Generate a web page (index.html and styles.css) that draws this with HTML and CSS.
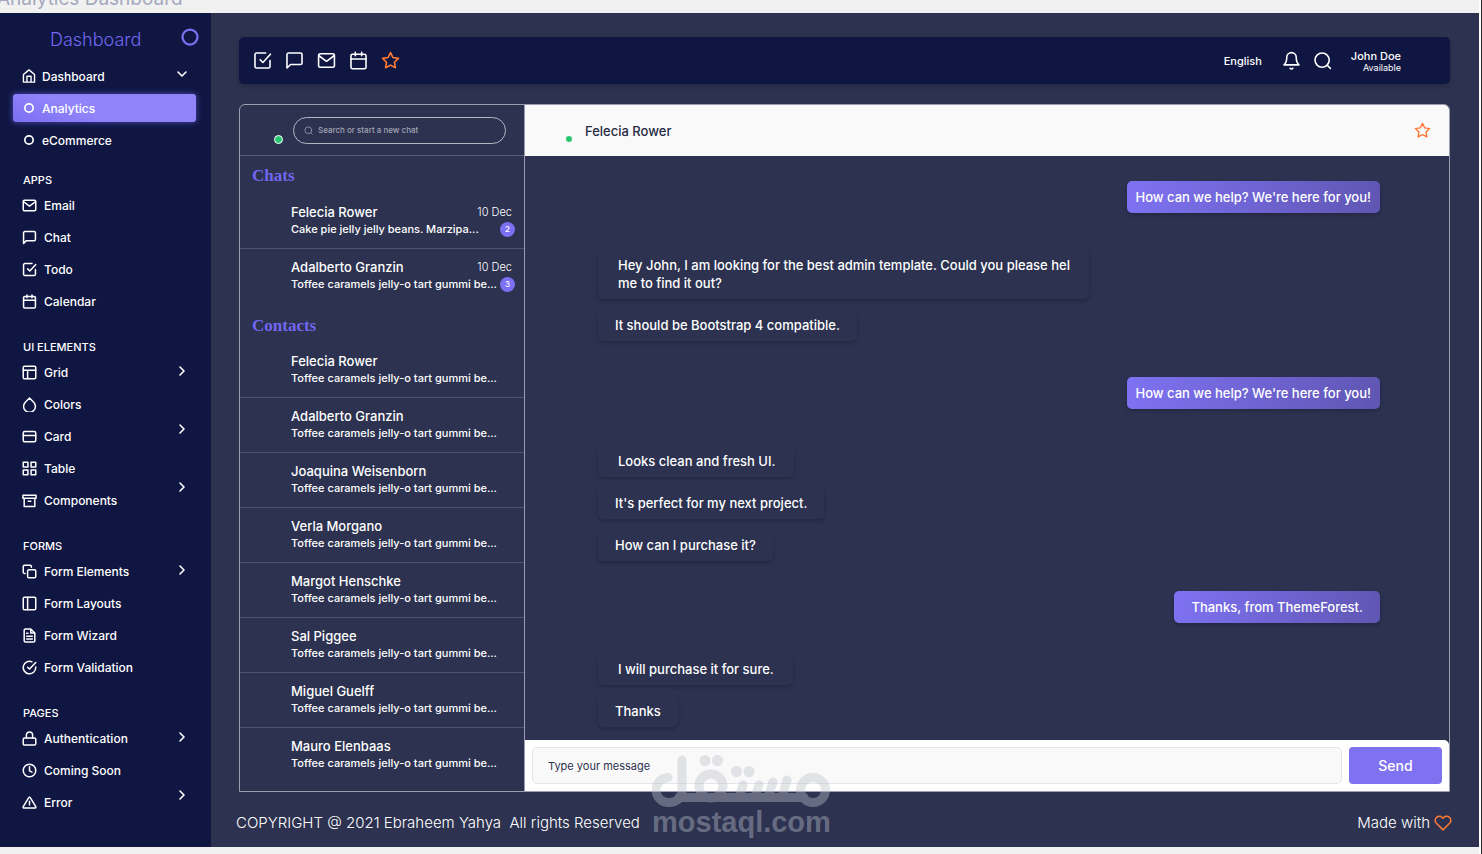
FILE: index.html
```html
<!DOCTYPE html>
<html lang="en">
<head>
<meta charset="utf-8">
<title>Analytics Dashboard</title>
<link rel="stylesheet" href="styles.css">
</head>
<body>
<svg class="sprite" aria-hidden="true">
  <symbol id="home" viewBox="0 0 24 24"><path d="M2.500 9.500 12 1.500l9.500 8V22.500h-19z"/><path d="M8.500 22V12.500h7V22"/></symbol>
  <symbol id="mail" viewBox="0 0 24 24"><rect x="2" y="3.500" width="20" height="17" rx="2"/><path d="m2.500 6 9.500 7 9.500-7"/></symbol>
  <symbol id="chat" viewBox="0 0 24 24"><path d="M21.500 15a2 2 0 0 1-2 2H7l-4.500 4.500V4.500a2 2 0 0 1 2-2h15a2 2 0 0 1 2 2z"/></symbol>
  <symbol id="todo" viewBox="0 0 24 24"><path d="m9 11 3.500 3.500L22 4"/><path d="M21.500 12v7.500a2 2 0 0 1-2 2h-15a2 2 0 0 1-2-2v-15a2 2 0 0 1 2-2H16"/></symbol>
  <symbol id="calendar" viewBox="0 0 24 24"><rect x="2.500" y="4" width="19" height="18.500" rx="2"/><path d="M16 1.500V6M8 1.500V6M2.500 10h19"/></symbol>
  <symbol id="star" viewBox="0 0 24 24"><path d="m12 2 3.100 6.300 6.900 1-5 4.900 1.200 6.900-6.200-3.300-6.200 3.300L7 14.200 2 9.300l6.900-1z"/></symbol>
  <symbol id="grid" viewBox="0 0 24 24"><rect x="2" y="2" width="20" height="20" rx="2"/><path d="M2 8.500h20M9 22V8.500"/></symbol>
  <symbol id="drop" viewBox="0 0 24 24"><path d="m12 1.500 6.700 6.800a9.500 9.500 0 1 1-13.400 0z"/></symbol>
  <symbol id="card" viewBox="0 0 24 24"><rect x="2" y="4" width="20" height="16.500" rx="2.500"/><path d="M2 10.500h20"/></symbol>
  <symbol id="table" viewBox="0 0 24 24"><path d="M2 2h7.500v7.500H2zM14.500 2H22v7.500h-7.500zM14.500 14.500H22V22h-7.500zM2 14.500h7.500V22H2z"/></symbol>
  <symbol id="box" viewBox="0 0 24 24"><path d="M3.500 8.500v13h17v-13M1.500 3.500h21v5h-21zM10 13h4"/></symbol>
  <symbol id="copy" viewBox="0 0 24 24"><rect x="9" y="9" width="13" height="13" rx="2"/><path d="M5 15H4a2 2 0 0 1-2-2V4a2 2 0 0 1 2-2h9a2 2 0 0 1 2 2v1"/></symbol>
  <symbol id="layout" viewBox="0 0 24 24"><rect x="2" y="2" width="20" height="20" rx="2"/><path d="M9 2v20"/></symbol>
  <symbol id="file" viewBox="0 0 24 24"><path d="M14 1.500H5.500a2 2 0 0 0-2 2v17a2 2 0 0 0 2 2h13a2 2 0 0 0 2-2V8zM14 1.500V8h6.500M16.500 13h-9M16.500 17.500h-9M9.500 8.500h-2"/></symbol>
  <symbol id="check" viewBox="0 0 24 24"><path d="M22 11v1a10 10 0 1 1-6-9.100"/><path d="M22 4 12 14.500l-3-3"/></symbol>
  <symbol id="lock" viewBox="0 0 24 24"><rect x="2" y="11" width="20" height="11.500" rx="2"/><path d="M7 11V6.500a5 5 0 0 1 10 0V11"/></symbol>
  <symbol id="clock" viewBox="0 0 24 24"><circle cx="12" cy="12" r="10"/><path d="M12 6v6.500l4 2"/></symbol>
  <symbol id="alert" viewBox="0 0 24 24"><path d="M10.500 4.500 2 18.500a1.500 1.500 0 0 0 1.300 2.300h17.400a1.500 1.500 0 0 0 1.300-2.300l-8.500-14a1.700 1.700 0 0 0-3 0zM12 10v6"/></symbol>
  <symbol id="ring" viewBox="0 0 24 24"><circle cx="12" cy="12" r="10"/></symbol>
  <symbol id="bell" viewBox="0 0 24 24"><path d="M18 8a6 6 0 0 0-12 0c0 7-3.500 9.500-3.500 9.500h19S18 15 18 8M10.300 21.800a2 2 0 0 0 3.400 0"/></symbol>
  <symbol id="search" viewBox="0 0 24 24"><circle cx="11.500" cy="11.500" r="9"/><path d="m18 18 4 4"/></symbol>
  <symbol id="right" viewBox="0 0 12 12"><path d="m4 2 4 4-4 4"/></symbol>
  <symbol id="down" viewBox="0 0 12 12"><path d="m2 4 4 4 4-4"/></symbol>
  <symbol id="heart" viewBox="0 0 24 24"><path d="M20.800 4.600a5.500 5.500 0 0 0-7.800 0l-1 1.100-1-1.100a5.500 5.500 0 0 0-7.800 7.800L12 21.200l8.800-8.800a5.500 5.500 0 0 0 0-7.800z"/></symbol>
</svg>

<div class="strip"><span class="strip-title">Analytics Dashboard</span></div>

<div class="app">
  <aside class="sidebar">
    <div class="brand">
      <h1>Dashboard</h1>
      <svg class="brand-ring"><use href="#ring"/></svg>
    </div>
    <nav>
      <ul class="menu top-menu">
        <li><a class="item parent" href="#"><svg class="icon"><use href="#home"/></svg>Dashboard<svg class="chev"><use href="#down"/></svg></a></li>
        <li><a class="item active" href="#"><svg class="dot-icon"><use href="#ring"/></svg>Analytics</a></li>
        <li><a class="item child" href="#"><svg class="dot-icon"><use href="#ring"/></svg>eCommerce</a></li>
      </ul>

      <section class="group">
        <h2>APPS</h2>
        <ul class="menu">
          <li><a class="item" href="#"><svg class="icon"><use href="#mail"/></svg>Email</a></li>
          <li><a class="item" href="#"><svg class="icon"><use href="#chat"/></svg>Chat</a></li>
          <li><a class="item" href="#"><svg class="icon"><use href="#todo"/></svg>Todo</a></li>
          <li><a class="item" href="#"><svg class="icon"><use href="#calendar"/></svg>Calendar</a></li>
        </ul>
      </section>

      <section class="group">
        <h2>UI ELEMENTS</h2>
        <div class="split">
          <ul class="menu">
            <li><a class="item" href="#"><svg class="icon"><use href="#grid"/></svg>Grid</a></li>
            <li><a class="item" href="#"><svg class="icon"><use href="#drop"/></svg>Colors</a></li>
            <li><a class="item" href="#"><svg class="icon"><use href="#card"/></svg>Card</a></li>
            <li><a class="item" href="#"><svg class="icon"><use href="#table"/></svg>Table</a></li>
            <li><a class="item" href="#"><svg class="icon"><use href="#box"/></svg>Components</a></li>
          </ul>
          <div class="chevs"><svg class="chev"><use href="#right"/></svg><svg class="chev"><use href="#right"/></svg><svg class="chev"><use href="#right"/></svg></div>
        </div>
      </section>

      <section class="group">
        <h2>FORMS</h2>
        <div class="split">
          <ul class="menu">
            <li><a class="item" href="#"><svg class="icon"><use href="#copy"/></svg>Form Elements</a></li>
            <li><a class="item" href="#"><svg class="icon"><use href="#layout"/></svg>Form Layouts</a></li>
            <li><a class="item" href="#"><svg class="icon"><use href="#file"/></svg>Form Wizard</a></li>
            <li><a class="item" href="#"><svg class="icon"><use href="#check"/></svg>Form Validation</a></li>
          </ul>
          <div class="chevs"><svg class="chev"><use href="#right"/></svg></div>
        </div>
      </section>

      <section class="group">
        <h2>PAGES</h2>
        <div class="split">
          <ul class="menu">
            <li><a class="item" href="#"><svg class="icon"><use href="#lock"/></svg>Authentication</a></li>
            <li><a class="item" href="#"><svg class="icon"><use href="#clock"/></svg>Coming Soon</a></li>
            <li><a class="item" href="#"><svg class="icon"><use href="#alert"/></svg>Error</a></li>
          </ul>
          <div class="chevs"><svg class="chev"><use href="#right"/></svg><svg class="chev"><use href="#right"/></svg></div>
        </div>
      </section>
    </nav>
  </aside>

  <main class="main">
    <header class="topbar">
      <div class="shortcuts">
        <button aria-label="Todo"><svg><use href="#todo"/></svg></button>
        <button aria-label="Chat"><svg><use href="#chat"/></svg></button>
        <button aria-label="Email"><svg><use href="#mail"/></svg></button>
        <button aria-label="Calendar"><svg><use href="#calendar"/></svg></button>
        <button class="orange" aria-label="Favourites"><svg><use href="#star"/></svg></button>
      </div>
      <div class="tools">
        <button class="language">English</button>
        <button aria-label="Notifications"><svg><use href="#bell"/></svg></button>
        <button aria-label="Search"><svg><use href="#search"/></svg></button>
        <div class="user"><strong>John Doe</strong><small>Available</small></div>
      </div>
    </header>

    <div class="panel">
      <section class="people">
        <div class="people-head">
          <span class="me"><span class="status"></span></span>
          <label class="search">
            <svg><use href="#search"/></svg>
            <input type="search" placeholder="Search or start a new chat" aria-label="Search or start a new chat">
          </label>
        </div>
        <h3>Chats</h3>
        <ul class="threads">
          <li><div class="line"><b>Felecia Rower</b><time>10 Dec</time></div><div class="line"><p>Cake pie jelly jelly beans. Marzipa...</p><span class="count">2</span></div></li>
          <li><div class="line"><b>Adalberto Granzin</b><time>10 Dec</time></div><div class="line"><p>Toffee caramels jelly-o tart gummi be...</p><span class="count">3</span></div></li>
        </ul>
        <h3>Contacts</h3>
        <ul class="threads">
          <li><b>Felecia Rower</b><p>Toffee caramels jelly-o tart gummi be...</p></li>
          <li><b>Adalberto Granzin</b><p>Toffee caramels jelly-o tart gummi be...</p></li>
          <li><b>Joaquina Weisenborn</b><p>Toffee caramels jelly-o tart gummi be...</p></li>
          <li><b>Verla Morgano</b><p>Toffee caramels jelly-o tart gummi be...</p></li>
          <li><b>Margot Henschke</b><p>Toffee caramels jelly-o tart gummi be...</p></li>
          <li><b>Sal Piggee</b><p>Toffee caramels jelly-o tart gummi be...</p></li>
          <li><b>Miguel Guelff</b><p>Toffee caramels jelly-o tart gummi be...</p></li>
          <li><b>Mauro Elenbaas</b><p>Toffee caramels jelly-o tart gummi be...</p></li>
        </ul>
      </section>

      <section class="talk">
        <header class="talk-head">
          <span class="peer"><span class="status small"></span></span>
          <h2>Felecia Rower</h2>
          <button class="orange" aria-label="Favourite"><svg><use href="#star"/></svg></button>
        </header>
        <div class="messages">
          <div class="turn out"><p>How can we help? We're here for you!</p></div>
          <div class="turn in"><p class="wide">Hey John, I am looking for the best admin template. Could you please hel<br>me to find it out?</p><p>It should be Bootstrap 4 compatible.</p></div>
          <div class="turn out"><p>How can we help? We're here for you!</p></div>
          <div class="turn in"><p class="wide">Looks clean and fresh UI.</p><p>It's perfect for my next project.</p><p>How can I purchase it?</p></div>
          <div class="turn out late"><p class="wide">Thanks, from ThemeForest.</p></div>
          <div class="turn in late"><p class="wide">I will purchase it for sure.</p><p>Thanks</p></div>
        </div>
        <form class="composer">
          <input type="text" placeholder="Type your message" aria-label="Type your message">
          <button type="button">Send</button>
        </form>
      </section>
    </div>

    <footer class="footer">
      <span>COPYRIGHT @ 2021 Ebraheem Yahya&nbsp; All rights Reserved</span>
      <span class="made">Made with <svg><use href="#heart"/></svg></span>
    </footer>
  </main>
</div>

<div class="watermark">
  <svg viewBox="0 0 180 53" aria-hidden="true">
    <path d="M16 22.500a12.500 12.500 0 1 0 1 25c8 0 13-5 13-13V5"/>
    <path d="M27 42.500h125"/>
    <circle cx="59" cy="31" r="12"/>
    <path d="m91 30-4 12M107 30l-4 12M121 27l-5 15M135 25l-5 17"/>
    <circle cx="161" cy="35" r="12.500"/>
    <g class="fill"><circle cx="53" cy="5.500" r="5.500"/><circle cx="65.500" cy="5.500" r="5.500"/><circle cx="84.500" cy="16.500" r="5.500"/><circle cx="97" cy="16.500" r="5.500"/></g>
  </svg>
  <span>mostaql.com</span>
</div>
</body>
</html>
```

FILE: styles.css
```css
* { box-sizing: border-box; }

body {
  margin: 0;
  min-height: 100vh;
  display: flex;
  flex-direction: column;
  padding-bottom: 7px;
  background: #f1f1f1;
  border-right: 1px solid #2b2b2b;
  box-shadow: inset -2px 0 #fff;
  color: #fff;
  font-family: Inter, "Open Sans", sans-serif;
  font-size: 12px;
  font-weight: 500;
}

h1, h2, h3, p, ul { margin: 0; padding: 0; }
ul { list-style: none; }
a { color: inherit; text-decoration: none; }
svg { fill: none; stroke: currentColor; stroke-width: 2; stroke-linejoin: round; stroke-linecap: round; flex: none; }
button { border: 0; padding: 0; background: none; color: inherit; font: inherit; display: flex; }
input { font: inherit; }

.sprite { display: none; }

.strip { height: 13px; overflow: hidden; display: flex; align-items: flex-end; }
.strip-title {
  margin: 0 0 5px -3px;
  color: #a5a8bd;
  font-size: 19px;
  line-height: 18px;
  font-weight: 400;
}

.app { flex: 1; display: flex; margin-right: 2px; background: #2c3250; }

/* Sidebar */
.sidebar { width: 211px; flex: none; background: #0f1642; }
.brand { display: flex; align-items: center; justify-content: space-between; height: 47px; padding: 5px 12px 0 50px; }
.brand h1 { font-size: 18px; font-weight: 300; color: #7367f0; }
.brand-ring { width: 18px; height: 18px; color: #7b6ff2; stroke-width: 3; margin-bottom: 4px; }

.item { display: flex; align-items: center; height: 32px; padding-left: 22px; gap: 7px; font-size: 12px; }
.icon { width: 15px; height: 15px; stroke-width: 2.4; }
.top-menu .item { gap: 6px; }
.top-menu .icon { width: 14px; height: 14px; }
.dot-icon { width: 10px; height: 10px; stroke-width: 4; }
.chev { width: 12px; height: 12px; stroke-width: 1.6; }
.parent .chev { margin: 0 23px 4px auto; }
.top-menu .active, .top-menu .child { gap: 8px; }
.item.active {
  height: 28px;
  margin: 2px 15px 2px 13px;
  padding-left: 11px;
  border-radius: 3px;
  background: linear-gradient(200deg, #9184fb 60%, #7b6ff2);
  box-shadow: 0 0 6px #7367f0aa;
}
.item.child { padding-left: 24px; }

.group { margin-top: 22px; }
.top-menu + .group { margin-top: 16px; }
.group h2 { padding-left: 23px; font-size: 11px; line-height: 17px; font-weight: 500; }
.split { display: flex; }
.split .menu { flex: 1; }
.chevs { display: flex; flex-direction: column; gap: 46px; padding: 9px 23px 0 0; }

/* Main column */
.main { flex: 1; min-width: 0; display: flex; flex-direction: column; padding: 24px 29px 0 28px; }

.topbar {
  display: flex;
  align-items: center;
  justify-content: space-between;
  height: 47px;
  padding: 0 49px 0 14px;
  border-radius: 5px;
  background: #0f1642;
  box-shadow: 0 2px 5px #0003;
}
.topbar svg { width: 19px; height: 19px; }
.shortcuts { display: flex; gap: 13px; }
.tools { display: flex; align-items: center; gap: 12px; }
.language { margin-right: 8px; font-size: 11px; }
.orange { color: #ff7a36; }
.user { display: flex; flex-direction: column; align-items: flex-end; margin-left: 7px; }
.user strong { font-size: 11px; line-height: 14px; font-weight: 500; }
.user small { font-size: 9px; line-height: 10px; font-weight: 400; }

.panel {
  flex: 1;
  display: flex;
  margin-top: 20px;
  border: 1px solid #9b9eb0;
  border-radius: 6px 6px 0 0;
  overflow: hidden;
}

/* People column */
.people { width: 285px; flex: none; border-right: 1px solid #9b9eb0; }
.people-head { display: flex; align-items: center; height: 51px; padding: 0 18px 0 12px; gap: 9px; border-bottom: 1px solid #595e78; }
.me, .peer { position: relative; width: 32px; height: 28px; }
.status {
  position: absolute;
  right: 1px;
  bottom: 0;
  width: 9px;
  height: 9px;
  border: 1px solid #fff;
  border-radius: 50%;
  background: #28c76f;
}
.status.small { width: 6px; height: 6px; border: 0; right: 0; bottom: 3px; }
.search { flex: 1; display: flex; align-items: center; gap: 5px; height: 27px; padding: 0 10px; border: 1px solid #b5b7c5; border-radius: 14px; color: #a3a6b6; }
.search svg { width: 9px; height: 9px; }
.search input { flex: 1; min-width: 0; padding: 0; border: 0; outline: 0; background: none; color: inherit; font-size: 8px; }
.search input::placeholder { color: #a3a6b6; opacity: 1; }

.people h3 {
  padding: 9px 12px 0;
  height: 38px;
  color: #7367f0;
  font: bold 17px/22px "Liberation Serif", serif;
}
.people .threads + h3 { height: 39px; padding-top: 11px; }
.threads li { height: 55px; padding: 10px 6px 0 51px; border-bottom: 1px solid #4f546f; }
.threads li:last-child { border-bottom: 0; }
.threads b { display: block; font-size: 13px; line-height: 16px; font-weight: 500; }
.threads p { font-size: 11px; line-height: 18px; white-space: nowrap; }
.line { display: flex; justify-content: space-between; }
.line time { padding-right: 6px; font-size: 11px; line-height: 16px; font-weight: 300; }
.count { width: 15px; height: 15px; margin: 2px 3px 0 0; border-radius: 50%; background: #7b6ff2; font-size: 8px; line-height: 15px; text-align: center; }

/* Conversation */
.talk { flex: 1; min-width: 0; display: flex; flex-direction: column; }
.talk-head { display: flex; align-items: center; height: 51px; padding: 0 18px 0 15px; gap: 13px; background: #f9f9f9; color: #272b45; }
.talk-head h2 { flex: 1; font-size: 13px; font-weight: 500; }
.talk-head svg { width: 17px; height: 17px; }

.messages { flex: 1; padding: 25px 69px 0 73px; }
.turn { display: flex; flex-direction: column; align-items: flex-start; gap: 10px; margin-bottom: 36px; }
.turn.out { align-items: flex-end; }
.turn:has(+ .late) { margin-bottom: 30px; }
.turn:last-child { margin-bottom: 0; }
.turn p { padding: 7px 17px; border-radius: 5px; font-size: 13px; line-height: 18px; box-shadow: 0 2px 4px #0003; }
.turn p.wide { padding: 7px 19px 7px 20px; }
.turn.out p { padding: 7px 9px; background: linear-gradient(100deg, #7f72f3, #5f56b2); }
.turn.out p.wide { padding: 7px 17px; }

.composer { display: flex; gap: 7px; height: 51px; padding: 7px; background: #fff; border-radius: 0 5px 0 0; }
.composer input { flex: 1; min-width: 0; padding: 0 15px; border: 1px solid #e4e4ec; border-radius: 5px; background: #f9f9f9; font-size: 11px; font-weight: 400; }
.composer input::placeholder { color: #2c3250; opacity: 1; }
.composer button { width: 93px; align-items: center; justify-content: center; border-radius: 4px; background: #7f72f0; font-size: 14px; }

.footer { display: flex; justify-content: space-between; align-items: center; height: 55px; margin: 0 -2px 0 -3px; padding-top: 6px; font-size: 15px; font-weight: 300; }
.made { display: flex; align-items: center; gap: 4px; }
.made svg { width: 18px; height: 18px; color: #ff7a36; }

/* Overlaid site mark */
.watermark { position: absolute; left: 652px; top: 755px; width: 180px; opacity: .4; color: #bec0ca; pointer-events: none; }
.watermark svg { display: block; width: 180px; height: 53px; stroke-width: 9; }
.watermark .fill { fill: currentColor; stroke: none; }
.watermark span { display: block; font: bold 29px/28px "Liberation Sans", sans-serif; }
```
